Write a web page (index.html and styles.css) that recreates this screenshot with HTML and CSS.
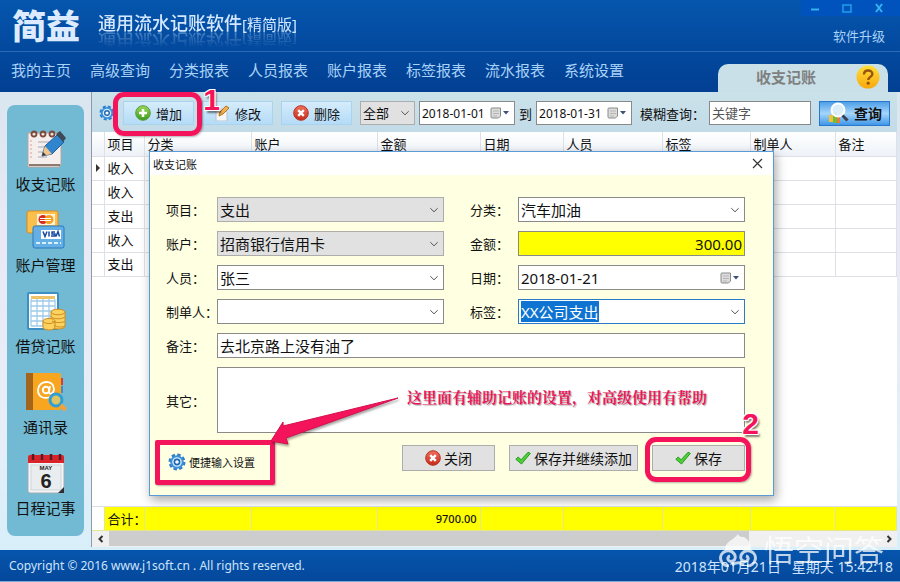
FILE: index.html
```html
<!DOCTYPE html>
<html lang="zh-CN">
<head>
    <meta charset="UTF-8">
    <title>通用流水记账软件</title>
    <link rel="stylesheet" href="styles.css">
</head>
<body>
    <svg class="defs" width="0" height="0">
        <defs>
            <linearGradient id="green" x1="0" y1="0" x2="0" y2="1">
                <stop offset="0" stop-color="#9bd85a"/><stop offset="1" stop-color="#3a9a1c"/>
            </linearGradient>
            <linearGradient id="red" x1="0" y1="0" x2="0" y2="1">
                <stop offset="0" stop-color="#f0705c"/><stop offset="1" stop-color="#c42a1c"/>
            </linearGradient>
            <linearGradient id="orange" x1="0" y1="0" x2="0" y2="1">
                <stop offset="0" stop-color="#ffdf3c"/><stop offset="1" stop-color="#f9a80c"/>
            </linearGradient>
        </defs>
        <symbol id="gear" viewBox="0 0 18 18">
            <circle cx="9" cy="9" r="7" fill="none" stroke="#2f7fcb" stroke-width="3" stroke-dasharray="3.3 2.2"/>
            <circle cx="9" cy="9" r="5.8" fill="#d3edfc" stroke="#3c8fd8" stroke-width="2"/>
            <circle cx="9" cy="9" r="2.6" fill="#fff" stroke="#1f66b4" stroke-width="1.6"/>
        </symbol>
        <symbol id="cross" viewBox="0 0 16 16">
            <circle cx="8" cy="8" r="7.3" fill="url(#red)" stroke="#b8321f"/>
            <path d="M5.2 5.2l5.6 5.6M10.8 5.2l-5.6 5.6" stroke="#fff" stroke-width="2.4"/>
        </symbol>
        <symbol id="check" viewBox="0 0 16 16">
            <path d="M.8 9.2l2.4-2.1 2.9 2.7 7-7.6 2.2 1.2L6.5 14z" fill="#4fcf3a" stroke="#249a1d"/>
        </symbol>
        <symbol id="chevron" viewBox="0 0 10 10">
            <path d="M1.3 3.2L5 6.8l3.7-3.6" fill="none" stroke="#555"/>
        </symbol>
        <symbol id="calendar" viewBox="0 0 20 12">
            <path d="M2 1h8.500v8l-2 2H2a1 1 0 0 1-1-1V2a1 1 0 0 1 1-1z" fill="#dcdcdc" stroke="#8a8a8a"/>
            <path d="M3 4h6M3 6.500h6M3 9h4" stroke="#b5b5b5"/>
            <path d="M13 4h6l-3 3.500z" fill="#3c5078"/>
        </symbol>
    </svg>

    <div class="app">
        <header class="header">
            <div class="title-bar">
                <div class="logo">简益</div>
                <h1 class="app-name">通用流水记账软件<small>[精简版]</small></h1>
                <div class="title-side">
                    <div class="window-controls">
                        <button type="button" aria-label="最小化"><svg width="10" height="10"><path d="M1 6.500h8" stroke="#35b3ee" stroke-width="2"/></svg></button>
                        <button type="button" aria-label="最大化"><svg width="10" height="10"><path d="M1 2h8v7H1z" fill="none" stroke="#1f9fe8" stroke-width="1.500"/></svg></button>
                        <button type="button" aria-label="关闭"><svg width="10" height="10"><path d="M2 1l6 8M8 1L2 9" stroke="#35b3ee" stroke-width="2"/></svg></button>
                    </div>
                    <a class="upgrade" href="#">软件升级</a>
                </div>
            </div>
            <nav class="nav">
                <a href="#">我的主页</a>
                <a href="#">高级查询</a>
                <a href="#">分类报表</a>
                <a href="#">人员报表</a>
                <a href="#">账户报表</a>
                <a href="#">标签报表</a>
                <a href="#">流水报表</a>
                <a href="#">系统设置</a>
                <div class="tab">
                    <span>收支记账</span>
                    <svg width="24" height="24" viewBox="0 0 24 24">
                        <circle cx="12" cy="12" r="11.500" fill="url(#orange)"/>
                        <path d="M8 9.500c0-5.500 8.400-5 8.400-.6 0 3-4.200 3-4.200 6.100" fill="none" stroke="#9a5408" stroke-width="2.400"/>
                        <circle cx="12.200" cy="18.200" r="1.600" fill="#9a5408"/>
                    </svg>
                </div>
            </nav>
        </header>

        <div class="main">
            <aside class="sidebar">
                <a href="#">
                    <svg width="40" height="40" viewBox="0 0 40 40">
                        <path d="M2 4h33v31l-2 3H2z" fill="#f4efec" stroke="#b9a49c"/>
                        <path d="M3 36h31" stroke="#8f7a70" stroke-width="2"/>
                        <path d="M12 13h12M12 18h10M12 23h7M12 28h9" stroke="#c5c0c5" stroke-width="1.500"/>
                        <path d="M5 11v20" stroke="#e39aa0" stroke-dasharray="2 2"/>
                        <g fill="none" stroke="#7c4a3c" stroke-width="1.800"><circle cx="8" cy="5" r="2.500"/><circle cx="17" cy="5" r="2.500"/><circle cx="26" cy="5" r="2.500"/></g>
                        <path d="M16 27l3-10L31 6l7 7-12 12z" fill="#2f86cf" stroke="#1d5c9c"/>
                        <path d="M16 27l3-10 7 8z" fill="#f0c48a"/>
                        <path d="M16 27l1-4 3 3z" fill="#333"/>
                        <path d="M30 5l4-3 6 7-3 4z" fill="#3f4a58"/>
                    </svg>
                    <span>收支记账</span>
                </a>
                <a href="#">
                    <svg width="40" height="40" viewBox="0 0 40 40">
                        <rect x="1" y="1" width="31" height="22" rx="2" fill="#fbc04c" stroke="#d98a1c"/>
                        <rect x="11" y="4" width="18" height="11" fill="#fff3dc"/>
                        <circle cx="17" cy="9.500" r="4.500" fill="#d92b20"/><circle cx="23" cy="9.500" r="4.500" fill="#f6a021"/>
                        <path d="M14 8.500h11M14 10.500h11" stroke="#fff"/>
                        <rect x="7" y="16" width="31" height="22" rx="2" fill="#64b0e6" stroke="#2879ba"/>
                        <rect x="15" y="20" width="20" height="9" fill="#fff"/>
                        <path d="M17 21.500l2 5 2-5M23 21.500v5M29 22h-3v2h3v2h-4M30 26.500l2-5 1.500 5" fill="none" stroke="#17479e" stroke-width="1.500"/>
                        <path d="M10 33h25" stroke="#d9f0ff" stroke-width="2" stroke-dasharray="4 2"/>
                    </svg>
                    <span>账户管理</span>
                </a>
                <a href="#">
                    <svg width="40" height="40" viewBox="0 0 40 40">
                        <rect x="2" y="2" width="30" height="36" rx="1" fill="#fff" stroke="#3b8fc4" stroke-width="2"/>
                        <path d="M5 5h24v3H5z" fill="#edc36a"/>
                        <path d="M5 10h24M5 15h24M5 20h24M5 25h24M5 30h24M5 35h24M5 8v27M11 8v27M17 8v27M23 8v27M29 8v27" stroke="#9fcbea" stroke-width="1.300"/>
                        <g fill="#fbd160" stroke="#cf8e1c">
                            <path d="M25 21v14c0 4 14 4 14 0V21z"/><path d="M17 30v6c0 4 12 4 12 0v-6z"/>
                            <ellipse cx="32" cy="21" rx="7" ry="2.800"/><ellipse cx="23" cy="30" rx="6" ry="2.500"/>
                            <path d="M25 25.500c1 3 13 3 14 0M26 30c3 2 12 2 13 0M28 34.500c3 2 10 2 11 0" fill="none"/>
                        </g>
                    </svg>
                    <span>借贷记账</span>
                </a>
                <a href="#">
                    <svg width="42" height="40" viewBox="0 0 42 40">
                        <path d="M35 6h3v7h-3z" fill="#d43e3e"/><path d="M35 14h3v7h-3z" fill="#458acb"/>
                        <rect x="1" y="1" width="35" height="37" rx="2" fill="#f8a51f"/>
                        <path d="M1 1h7v37H1z" fill="#a3651c"/>
                        <circle cx="21" cy="18" r="3.200" fill="none" stroke="#fff" stroke-width="2"/>
                        <path d="M25 14l-1 6c0 3 5 2 5-3 0-10-16-9-16 1 0 8 7 9 12 7" fill="none" stroke="#fff" stroke-width="1.800"/>
                        <circle cx="31" cy="28" r="6" fill="#c9d98f" fill-opacity=".6" stroke="#2e9fd6" stroke-width="3"/>
                        <path d="M35.500 33l5 5" stroke="#f3a13a" stroke-width="4"/>
                    </svg>
                    <span>通讯录</span>
                </a>
                <a href="#">
                    <svg width="40" height="42" viewBox="0 0 40 42">
                        <rect x="2" y="3" width="36" height="37" rx="2" fill="#f3f5f6" stroke="#a4abb0"/>
                        <path d="M2 10V4a2 2 0 0 1 2-2h32a2 2 0 0 1 2 2v6z" fill="#d9232b"/>
                        <path d="M7 1v6M16 1v6M25 1v6M34 1v6" stroke="#5c1a1e" stroke-width="2.500"/>
                        <rect x="5" y="12" width="30" height="25" fill="#e9edf0" stroke="#cfd5d9"/>
                        <text x="20" y="17" class="cal-month">MAY</text>
                        <text x="20" y="35" class="cal-day">6</text>
                        <path d="M38 34l-6 6h6z" fill="#2b2f33"/>
                    </svg>
                    <span>日程记事</span>
                </a>
            </aside>

            <section class="content">
                <form class="toolbar">
                    <button type="button" class="icon-button" aria-label="设置"><svg width="16" height="16"><use href="#gear"/></svg></button>
                    <div class="marked">
                        <button type="button" class="tool-button">
                            <svg width="16" height="16" viewBox="0 0 16 16"><circle cx="8" cy="8" r="7.300" fill="url(#green)" stroke="#5a9a38"/><path d="M8 4v8M4 8h8" stroke="#fff" stroke-width="2.600"/></svg>
                            增加
                        </button>
                        <div class="ring ring-add"><span class="step">1</span></div>
                    </div>
                    <button type="button" class="tool-button">
                        <svg width="16" height="16" viewBox="0 0 16 16"><path d="M2 4h8l3 3v9H2z" fill="#f6f6f6" stroke="#bcc4cc"/><path d="M5 11l1-4 6-6 3 2-6 6z" fill="#f0b452" stroke="#b8741c"/></svg>
                        修改
                    </button>
                    <button type="button" class="tool-button"><svg width="16" height="16"><use href="#cross"/></svg>删除</button>
                    <div class="filter">
                        <div class="combo combo-small disabled">
                            <select aria-label="项目筛选"><option>全部</option></select>
                            <svg width="10" height="10"><use href="#chevron"/></svg>
                        </div>
                        <div class="date date-small">
                            <input type="text" value="2018-01-01" aria-label="开始日期">
                            <svg width="20" height="12"><use href="#calendar"/></svg>
                        </div>
                        <span>到</span>
                        <div class="date date-small">
                            <input type="text" value="2018-01-31" aria-label="结束日期">
                            <svg width="20" height="12"><use href="#calendar"/></svg>
                        </div>
                    </div>
                    <div class="filter filter-search">
                        <label for="keyword">模糊查询：</label>
                        <input type="text" id="keyword" class="keyword" placeholder="关键字">
                    </div>
                    <button type="button" class="search-button">
                        <svg width="22" height="22" viewBox="0 0 22 22">
                            <path d="M2 13h4v7H2z" fill="#f3c234"/><path d="M6 10h4v11H6z" fill="#6cbf3c"/><path d="M10 14h3v7h-3z" fill="#e9793c"/>
                            <circle cx="11" cy="8" r="6.500" fill="#e3f3fb" fill-opacity=".9" stroke="#fff" stroke-width="2"/>
                            <path d="M15.500 13.500l5 5" stroke="#3a3f52" stroke-width="3"/>
                        </svg>
                        查询
                    </button>
                </form>

                <div class="table-area">
                    <table class="records">
                        <colgroup>
                            <col class="w-mark"><col class="w-item"><col class="w-category"><col class="w-account"><col class="w-amount">
                            <col class="w-date"><col class="w-person"><col class="w-tag"><col class="w-maker"><col>
                        </colgroup>
                        <thead>
                            <tr><th></th><th>项目</th><th>分类</th><th>账户</th><th>金额</th><th>日期</th><th>人员</th><th>标签</th><th>制单人</th><th>备注</th></tr>
                        </thead>
                        <tbody>
                            <tr><td><svg class="current" width="6" height="10"><path d="M1 1l4 4-4 4z" fill="#333"/></svg></td><td>收入</td><td></td><td></td><td></td><td></td><td></td><td></td><td></td><td></td></tr>
                            <tr><td></td><td>收入</td><td></td><td></td><td></td><td></td><td></td><td></td><td></td><td></td></tr>
                            <tr><td></td><td>支出</td><td></td><td></td><td></td><td></td><td></td><td></td><td></td><td></td></tr>
                            <tr><td></td><td>收入</td><td></td><td></td><td></td><td></td><td></td><td></td><td></td><td></td></tr>
                            <tr><td></td><td>支出</td><td></td><td></td><td></td><td></td><td></td><td></td><td></td><td></td></tr>
                            <tr class="filler"><td colspan="10"></td></tr>
                        </tbody>
                        <tfoot>
                            <tr><td></td><td>合计：</td><td></td><td></td><td class="total">9700.00</td><td></td><td></td><td></td><td></td><td></td></tr>
                        </tfoot>
                    </table>
                </div>
                <div class="scrollbar">
                    <button type="button" aria-label="向左"><svg width="8" height="8"><path d="M5.500 1L2.500 4l3 3" fill="none" stroke="#333" stroke-width="2"/></svg></button>
                    <div class="track"><div class="thumb"></div></div>
                    <button type="button" aria-label="向右"><svg width="8" height="8"><path d="M2.500 1l3 3-3 3" fill="none" stroke="#333" stroke-width="2"/></svg></button>
                </div>
            </section>
        </div>

        <footer class="footer">
            <span>Copyright © 2016 www.j1soft.cn . All rights reserved.</span>
            <time>2018年01月21日&nbsp;&nbsp; 星期天 15:42:18</time>
        </footer>

        <div class="dialog" role="dialog" aria-labelledby="dialogTitle">
            <div class="dialog-title">
                <h2 id="dialogTitle">收支记账</h2>
                <button type="button" aria-label="关闭窗口"><svg width="11" height="11"><path d="M1 1l9 9M10 1l-9 9" stroke="#333" stroke-width="1.200"/></svg></button>
            </div>
            <form class="dialog-body">
                <div class="fields">
                    <label for="item">项目：</label>
                    <div class="combo disabled">
                        <select id="item"><option>支出</option></select>
                        <svg width="10" height="10"><use href="#chevron"/></svg>
                    </div>
                    <label for="category">分类：</label>
                    <div class="combo">
                        <select id="category"><option>汽车加油</option></select>
                        <svg width="10" height="10"><use href="#chevron"/></svg>
                    </div>

                    <label for="account">账户：</label>
                    <div class="combo disabled">
                        <select id="account"><option>招商银行信用卡</option></select>
                        <svg width="10" height="10"><use href="#chevron"/></svg>
                    </div>
                    <label for="amount">金额：</label>
                    <input type="text" id="amount" class="text amount" value="300.00">

                    <label for="person">人员：</label>
                    <div class="combo">
                        <select id="person"><option>张三</option></select>
                        <svg width="10" height="10"><use href="#chevron"/></svg>
                    </div>
                    <label for="date">日期：</label>
                    <div class="date">
                        <input type="text" id="date" value="2018-01-21">
                        <svg width="20" height="12"><use href="#calendar"/></svg>
                    </div>

                    <label for="maker">制单人：</label>
                    <div class="combo">
                        <select id="maker"><option></option></select>
                        <svg width="10" height="10"><use href="#chevron"/></svg>
                    </div>
                    <label for="tag">标签：</label>
                    <div class="combo active">
                        <input type="text" id="tag" value="XX公司支出">
                        <svg width="10" height="10"><use href="#chevron"/></svg>
                    </div>

                    <label for="remark">备注：</label>
                    <input type="text" id="remark" class="text wide" value="去北京路上没有油了">

                    <label for="other">其它：</label>
                    <div class="wide other-field">
                        <textarea id="other"></textarea>
                        <p class="note">这里面有辅助记账的设置，对高级使用有帮助</p>
                        <svg class="arrow" width="128" height="48" viewBox="0 0 128 48">
                            <path d="M127 1L12 29V25L0 44l17 3-2-6z" fill="#f4145c" stroke="#d40f4d"/>
                        </svg>
                    </div>
                </div>

                <div class="actions">
                    <div class="marked quick">
                        <a href="#"><svg width="18" height="18"><use href="#gear"/></svg>便捷输入设置</a>
                        <div class="ring ring-quick"></div>
                    </div>
                    <button type="button" class="action"><svg width="16" height="16"><use href="#cross"/></svg>关闭</button>
                    <button type="button" class="action action-wide"><svg width="16" height="16"><use href="#check"/></svg>保存并继续添加</button>
                    <div class="marked">
                        <button type="button" class="action"><svg width="16" height="16"><use href="#check"/></svg>保存</button>
                        <div class="ring ring-save"><span class="step">2</span></div>
                    </div>
                </div>
            </form>
        </div>

        <div class="watermark">
            <svg width="38" height="34" viewBox="0 0 38 34" fill="none">
                <path d="M6 17C6 8 14 8 19 1c1 3 4 3 6 3 5 3 7 7 7 13z" fill="#fff"/>
                <path d="M10 33c-9 0-12-12-3-15 8-2 12 7 7 10-5 2-7-4-3-5M28 33c9 0 12-12 3-15-8-2-12 7-7 10 5 2 7-4 3-5M13 32c4-3 8-3 12 0" stroke="#fff" stroke-width="3"/>
            </svg>
            <span>悟空问答</span>
        </div>
    </div>

    <script>
        document.getElementById("tag").select();
    </script>
</body>
</html>
```
FILE: styles.css
```css
* {
    box-sizing: border-box;
}
body {
    margin: 0;
    font-family: "Noto Sans", "Noto Sans CJK SC", sans-serif;
    font-size: 13px;
    color: #111;
}
a {
    color: inherit;
    text-decoration: none;
}
button, input, select, textarea {
    font: inherit;
    color: inherit;
    margin: 0;
    border-radius: 0;
}
button {
    cursor: pointer;
}
svg {
    flex: none;
}
.defs {
    position: absolute;
}
.app {
    position: relative;
    display: flex;
    flex-direction: column;
    height: 100vh;
    overflow: hidden;
    background: linear-gradient(#cfe4ec, #e9e9f5 40%, #e6eef8 75%, #d3eff9);
}

/* header */
.header {
    background: linear-gradient(#0556ad, #034a9f 50%, #023f92);
    color: #a9d2f7;
}
.title-bar {
    display: flex;
    height: 52px;
    padding-left: 12px;
    border-bottom: 1px solid #2a6ab8;
}
.logo {
    width: 86px;
    font-size: 34px;
    font-weight: 900;
    line-height: 52px;
    color: #dcebff;
}
.app-name {
    margin: 12px 0 0;
    font-size: 18px;
    font-weight: 500;
    line-height: 22px;
    height: 22px;
    color: #d3e8ff;
    white-space: nowrap;
    -webkit-box-reflect: below -4px linear-gradient(transparent 20%, rgba(0, 0, 0, 0.4));
}
.app-name small {
    font-size: 15px;
    font-weight: normal;
}
.title-side {
    margin-left: auto;
    display: flex;
    flex-direction: column;
    align-items: flex-end;
}
.window-controls {
    display: flex;
    gap: 20px;
    padding: 0 15px 0 8px;
    background: #0052bd;
}
.window-controls button {
    display: flex;
    padding: 3px 1px;
    border: 0;
    background: none;
}
.upgrade {
    margin: 10px 15px 0 0;
    line-height: 20px;
}
.nav {
    display: flex;
    align-items: center;
    gap: 19px;
    height: 40px;
    padding: 0 12px 0 11px;
    font-size: 15px;
    white-space: nowrap;
}
.nav a {
    margin-bottom: 6px;
}
.tab {
    align-self: flex-end;
    display: flex;
    align-items: center;
    justify-content: space-between;
    width: 170px;
    height: 28px;
    margin-left: auto;
    padding: 0 8px 3px 38px;
    border-radius: 10px 10px 0 0;
    background: #c9e0e8;
    color: #808080;
    font-weight: bold;
}

/* sidebar */
.main {
    flex: 1;
    min-height: 0;
    display: flex;
    padding-right: 3px;
}
.sidebar {
    display: flex;
    flex-direction: column;
    gap: 15px;
    flex: none;
    width: 77px;
    margin: 13px 7px 14px;
    padding-top: 24px;
    border-radius: 8px;
    background: #72b9d3;
    font-size: 15px;
    line-height: 18px;
}
.sidebar a {
    display: flex;
    flex-direction: column;
    align-items: center;
    justify-content: space-between;
    height: 66px;
    padding-bottom: 2px;
}
.cal-month, .cal-day {
    font-family: "Liberation Sans", sans-serif;
    font-weight: bold;
    text-anchor: middle;
    fill: #222;
}
.cal-month {
    font-size: 6px;
}
.cal-day {
    font-size: 20px;
}

/* toolbar */
.content {
    flex: 1;
    min-width: 0;
    display: flex;
    flex-direction: column;
    margin-bottom: 3px;
    border-left: 1px solid #8e9aa5;
}
.toolbar {
    display: flex;
    align-items: center;
    gap: 8px;
    height: 40px;
    padding: 2px 7px 0;
    background: linear-gradient(#cbe2ea, #c2dbe7);
    white-space: nowrap;
}
.icon-button {
    display: flex;
    padding: 0;
    border: 0;
    background: none;
}
.marked {
    position: relative;
}
.tool-button {
    flex: none;
    display: flex;
    align-items: center;
    justify-content: center;
    gap: 5px;
    width: 71px;
    height: 24px;
    padding: 0;
    border: 1px solid #a9d3ee;
    background: linear-gradient(#d5ecfb, #b4dbf7);
}
.filter {
    display: flex;
    align-items: center;
    gap: 4px;
}
.filter-search {
    flex: 1;
    min-width: 0;
}
.keyword {
    flex: 1;
    width: 0;
    height: 24px;
    padding: 0 2px;
    border: 1px solid #888;
    background: #fff;
}
.keyword::placeholder {
    color: #555;
}
.search-button {
    flex: none;
    display: flex;
    align-items: center;
    justify-content: center;
    gap: 5px;
    width: 71px;
    height: 25px;
    padding: 0;
    border: 1px solid #2a78cc;
    background: linear-gradient(#4f9fe9, #a5d5fa 50%, #3f97e8);
    font-size: 14px;
    font-weight: bold;
}

/* combo and date boxes */
.combo, .date {
    display: grid;
    grid-template-columns: 1fr auto;
    align-items: center;
    height: 25px;
    border: 1px solid #8a8a8a;
    background: #fff;
    font-size: 15px;
}
.combo select, .combo input, .date input {
    grid-area: 1 / 1 / 2 / 3;
    width: 100%;
    min-width: 0;
    height: 23px;
    padding: 0 2px;
    border: 0;
    outline: none;
    background: none;
    appearance: none;
}
.combo svg, .date svg {
    grid-area: 1 / 2;
    margin-right: 4px;
    pointer-events: none;
}
.combo.disabled {
    border-color: #adadad;
    background: #e1e1e1;
}
.combo.active {
    border-color: #2a7ac8;
}
.combo.active input::selection {
    background: #0f74d1;
    color: #fff;
}
.combo-small {
    width: 55px;
    height: 24px;
    font-size: 13px;
}
.date-small {
    width: 96px;
    height: 24px;
    font-size: 12px;
}
.combo-small select, .date-small input {
    height: 22px;
}

/* records table */
.table-area {
    flex: 1;
    min-height: 0;
    background: #fff;
}
.records {
    width: 100%;
    height: 100%;
    table-layout: fixed;
    border-collapse: collapse;
}
.records th, .records td {
    height: 24px;
    padding: 0 0 0 3px;
    border-right: 1px solid #dfdfe6;
    border-bottom: 1px solid #dfdfe6;
    line-height: 20px;
    text-align: left;
    font-weight: normal;
    white-space: nowrap;
}
.records th {
    background: linear-gradient(#fff, #edf2f8);
}
.records .filler td {
    height: auto;
    border-right: 0;
}
.records tfoot td {
    background: #ff0;
    border-color: #e6e68a;
}
.records tfoot td:first-child {
    background: #fff;
}
.records td.total {
    padding-right: 3px;
    text-align: right;
    font-size: 11px;
    font-weight: 500;
}
.current {
    display: block;
}
.w-mark { width: 12px; }
.w-item { width: 40px; }
.w-category { width: 107px; }
.w-account { width: 126px; }
.w-amount { width: 103px; }
.w-date { width: 83px; }
.w-person { width: 99px; }
.w-tag { width: 88px; }
.w-maker { width: 85px; }
.scrollbar {
    display: flex;
    height: 16px;
    background: #f0f0f0;
}
.scrollbar button {
    display: flex;
    align-items: center;
    justify-content: center;
    width: 17px;
    padding: 0;
    border: 0;
    background: none;
}
.track {
    flex: 1;
}
.thumb {
    width: 83%;
    height: 15px;
    background: #cdcdcd;
}

/* footer */
.footer {
    display: flex;
    align-items: center;
    justify-content: space-between;
    height: 32px;
    padding: 0 7px 0 9px;
    border-bottom: 1px solid #7fa9d8;
    background: linear-gradient(#0655ad, #04489b);
    color: #cfe4fb;
    font-size: 12px;
}
.footer time {
    font-size: 14px;
}

/* entry dialog */
.dialog {
    position: absolute;
    left: 149px;
    top: 151px;
    width: 625px;
    border: 1px solid #5b9bd5;
    background: #ffffe1;
    box-shadow: 2px 4px 10px rgba(0, 0, 0, 0.35);
}
.dialog-title {
    display: flex;
    align-items: center;
    justify-content: space-between;
    height: 23px;
    padding: 0 10px 0 3px;
    background: #fff;
}
.dialog-title h2 {
    margin: 0;
    font-size: 11px;
    font-weight: normal;
}
.dialog-title button {
    display: flex;
    padding: 0;
    border: 0;
    background: none;
}
.dialog-body {
    padding: 22px 28px 24px 16px;
}
.fields {
    display: grid;
    grid-template-columns: 51px 1fr 74px 1fr;
    row-gap: 9px;
    align-items: center;
}
.fields label {
    white-space: nowrap;
}
.fields label:nth-of-type(even):not([for="other"]) {
    padding-left: 26px;
}
.text {
    width: 100%;
    height: 25px;
    padding: 0 2px;
    border: 1px solid #8a8a8a;
    background: #fff;
    font-size: 15px;
}
.amount {
    background: #ff0;
    text-align: right;
}
.wide {
    grid-column: 2 / 5;
}
.other-field {
    position: relative;
}
.other-field textarea {
    display: block;
    width: 100%;
    height: 66px;
    border: 1px solid #8a8a8a;
    background: #fff;
    resize: none;
}
.actions {
    display: flex;
    align-items: center;
    gap: 14px;
    margin-top: 12px;
}
.quick {
    margin-right: auto;
    font-size: 11px;
}
.quick a {
    display: flex;
    align-items: center;
    gap: 3px;
    padding: 8px 0 0 2px;
}
.action {
    display: flex;
    align-items: center;
    justify-content: center;
    gap: 3px;
    width: 93px;
    height: 26px;
    padding: 0;
    border: 1px solid #adadad;
    background: #e1e1e1;
    font-size: 14px;
    white-space: nowrap;
}
.action-wide {
    width: 129px;
}

/* guide marks */
.ring {
    position: absolute;
    border: 5px solid #f4145c;
    border-radius: 11px;
    box-shadow: 1px 1px 2px rgba(0, 0, 0, 0.3);
    pointer-events: none;
}
.ring-add {
    inset: -9px -8px -11px -10px;
}
.ring-quick {
    inset: -5px -20px -14px -11px;
    border-radius: 2px;
}
.ring-save {
    inset: -8px -6px -11px -7px;
}
.step {
    position: absolute;
    right: -23px;
    top: -12px;
    font-family: "Liberation Sans", sans-serif;
    font-size: 30px;
    font-weight: bold;
    line-height: 30px;
    color: #f4145c;
    text-shadow: 1px 1px 0 #fff, -1px -1px 0 #fff, 1px -1px 0 #fff, -1px 1px 0 #fff, 2px 3px 2px rgba(0, 0, 0, 0.5);
}
.ring-save .step {
    right: -13px;
    top: -33px;
}
.note {
    position: absolute;
    left: 190px;
    top: 20px;
    margin: 0;
    font-family: "Liberation Serif", "Noto Serif CJK SC", "Noto Sans CJK SC", serif;
    font-size: 15px;
    font-weight: bold;
    line-height: 22px;
    color: #e8185a;
    white-space: nowrap;
    text-shadow: 1px 1px 1px rgba(0, 0, 0, 0.35);
}
.arrow {
    position: absolute;
    left: 54px;
    top: 30px;
    z-index: 1;
    filter: drop-shadow(1px 2px 1px rgba(0, 0, 0, 0.35));
}
.watermark {
    position: absolute;
    right: 16px;
    bottom: 14px;
    display: flex;
    align-items: center;
    gap: 7px;
    font-size: 30px;
    line-height: 36px;
    color: #fff;
    opacity: 0.75;
    pointer-events: none;
}
```
